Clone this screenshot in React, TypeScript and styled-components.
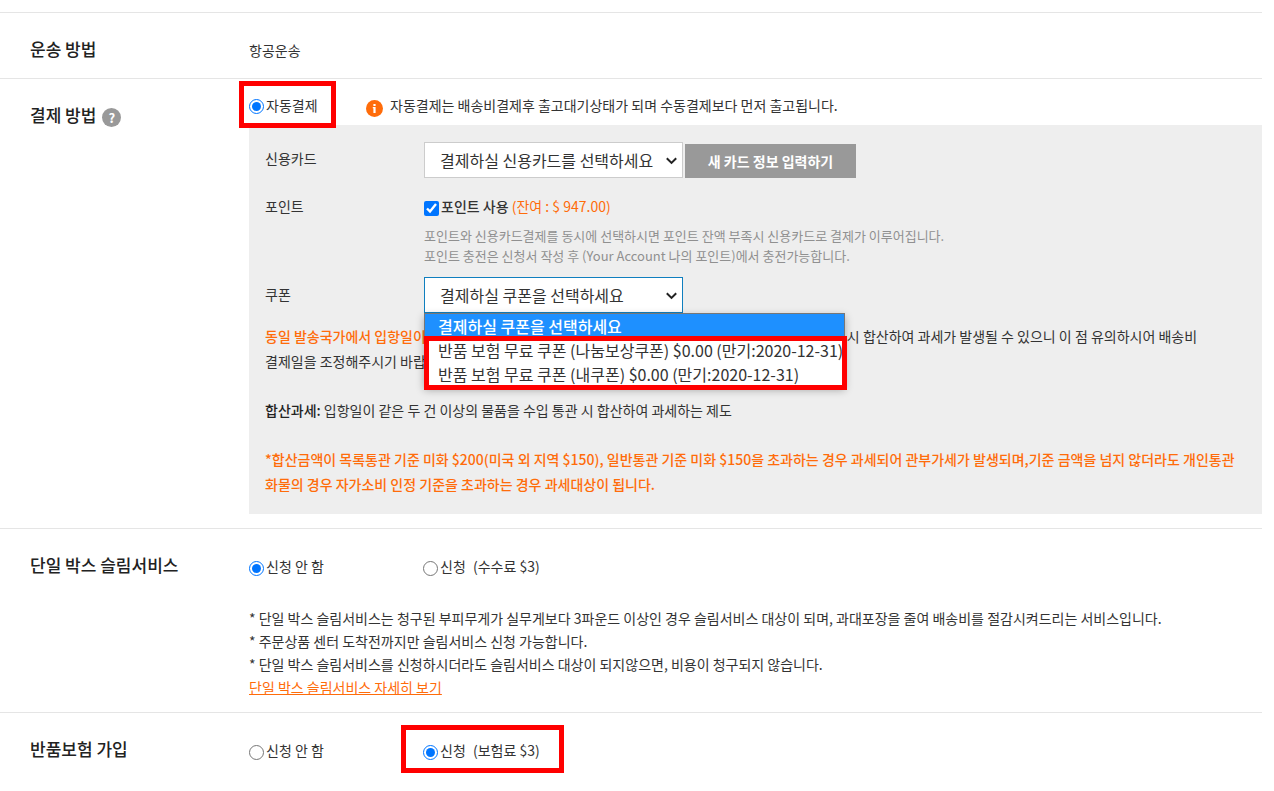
import React from 'react';
import styled, { createGlobalStyle, css } from 'styled-components';

const GlobalStyle = createGlobalStyle`
  * { box-sizing: border-box; }
  body {
    margin: 0;
    background: #fff;
    color: #333;
    font-family: "Noto Sans CJK KR", "Noto Sans", sans-serif;
    font-size: 14px;
    line-height: 24px;
    word-break: keep-all;
  }
  button, select, input { font-family: inherit; }
  p, h2, ul { margin: 0; padding: 0; }
`;

const Page = styled.main`
  padding: 12px 12px 0 0;
`;

const Section = styled.section<{ $tail?: string }>`
  display: grid;
  grid-template-columns: 249px minmax(0, 1fr);
  border-top: 1px solid #e5e5e5;
  padding-bottom: ${(p) => p.$tail ?? '14px'};
`;

const Heading = styled.div`
  display: flex;
  align-items: center;
  align-self: start;
  gap: 6px;
  padding: 24px 0 0 30px;

  h2 {
    font-size: 17px;
    line-height: 24px;
    font-weight: 500;
    color: #222;
  }
`;

const HelpButton = styled.button`
  width: 19px;
  height: 19px;
  margin-top: 4px;
  padding: 0;
  border: 0;
  border-radius: 50%;
  background: #999;
  color: #fff;
  font-size: 13px;
  line-height: 19px;
  font-weight: 700;
`;

const Content = styled.div<{ $top: string }>`
  padding-top: ${(p) => p.$top};
`;

const Options = styled.div<{ $first: string }>`
  display: grid;
  grid-template-columns: ${(p) => p.$first} auto;
  justify-content: start;
  align-items: center;
`;

const mark = css`
  content: "";
  position: absolute;
  border: 5px solid #f00;
  pointer-events: none;
  z-index: 3;
`;

const Choice = styled.label<{ $marked?: 'narrow' | 'wide' }>`
  position: relative;
  display: inline-flex;
  align-items: center;
  justify-self: start;
  gap: 2px;
  white-space: pre;

  input {
    width: 15px;
    height: 15px;
    margin: 4px 0 0;
    accent-color: #0075ff;
  }

  ${(p) =>
    p.$marked &&
    css`
      &::after {
        ${mark}
        inset: ${p.$marked === 'wide' ? '-13px -24px -11px -22px' : '-12px -18px -11px -10px'};
      }
    `}
`;

const Fee = styled.span`
  padding-left: 2px;
`;

const Notice = styled.p`
  display: flex;
  align-items: center;
  gap: 7px;

  svg { margin-top: 8px; }
`;

const Panel = styled.div`
  margin-top: 8px;
  padding: 17px 0 17px 16px;
  background: #eee;
`;

const Field = styled.div<{ $gap: string }>`
  display: grid;
  grid-template-columns: 159px minmax(0, 1fr);
  margin-bottom: ${(p) => p.$gap};
`;

const FieldLabel = styled.label<{ $height: string }>`
  line-height: ${(p) => p.$height};
`;

const Controls = styled.div`
  display: flex;
  align-items: flex-end;
  gap: 2px;
`;

const SelectWrap = styled.div`
  position: relative;
  width: 259px;
  height: 36px;

  > svg {
    position: absolute;
    top: 15px;
    right: 5px;
    pointer-events: none;
  }
`;

const Select = styled.select<{ $open?: boolean }>`
  width: 100%;
  height: 100%;
  padding: 0 0 0 15px;
  appearance: none;
  border: 1px solid ${(p) => (p.$open ? '#0f7fbf' : '#ccc')};
  border-radius: 0;
  background-color: #fff;
  color: #333;
  font-size: 16px;
`;

const CardButton = styled.button`
  width: 171px;
  height: 34px;
  padding: 0;
  border: 0;
  background: #999;
  color: #fff;
  font-size: 14px;
  font-weight: 700;
`;

const PointChoice = styled.label`
  display: flex;
  align-items: center;
  gap: 2px;
  height: 20px;
  font-weight: 500;

  input {
    width: 15px;
    height: 15px;
    margin: 4px 0 0;
    accent-color: #0075ff;
  }
`;

const Balance = styled.span`
  color: #ff6c0a;
  font-weight: 400;
`;

const Hint = styled.p`
  margin-top: 10px;
  color: #909090;
  font-size: 13px;
  line-height: 20px;
`;

const OptionList = styled.ul`
  position: absolute;
  z-index: 2;
  top: 36px;
  left: 0;
  width: 421px;
  border: 1px solid #777;
  background: #fff;
  box-shadow: 0 3px 8px rgba(0, 0, 0, 0.3);
  list-style: none;

  &::after {
    ${mark}
    inset: 22px -3px -4px -1px;
  }
`;

const Option = styled.li<{ $active?: boolean }>`
  padding-left: 13px;
  background: ${(p) => (p.$active ? '#1e90ff' : '#fff')};
  color: ${(p) => (p.$active ? '#fff' : '#333')};
  font-size: 16px;
  font-weight: ${(p) => (p.$active ? 500 : 400)};
  line-height: 24px;
  white-space: nowrap;
`;

const Paragraph = styled.p<{ $warning?: boolean }>`
  line-height: 25px;
  white-space: nowrap;
  color: ${(p) => (p.$warning ? '#ff6c0a' : '#333')};
  font-weight: ${(p) => (p.$warning ? 500 : 400)};

  & + & { margin-top: 24px; }
`;

const Covered = styled.span`
  display: inline-block;
  width: 421px;
`;

const Strong = styled.strong<{ $orange?: boolean }>`
  color: ${(p) => (p.$orange ? '#ff6c0a' : '#222')};
  font-weight: 500;
`;

const Notes = styled.ul`
  margin-top: 29px;
  list-style: none;
  line-height: 23px;
`;

const DetailLink = styled.a`
  color: #ff6c0a;
  text-decoration: underline;
`;

function InfoIcon() {
  return (
    <svg width="17" height="17" viewBox="0 0 17 17" aria-hidden="true">
      <circle cx="8.5" cy="8.5" r="8.5" fill="#ff6c0a" />
      <rect x="7.4" y="4" width="2.2" height="2" fill="#fff" />
      <path d="M6.8 7h2.8v6H7.4V8.2h-.6z" fill="#fff" />
    </svg>
  );
}

function Chevron() {
  return (
    <svg width="13" height="8" viewBox="0 0 13 8" fill="none" aria-hidden="true">
      <path d="M1.8 1.2 6.5 5.9l4.7-4.7" stroke="#222" strokeWidth="2" />
    </svg>
  );
}

const coupons = [
  '결제하실 쿠폰을 선택하세요',
  '반품 보험 무료 쿠폰 (나눔보상쿠폰) $0.00 (만기:2020-12-31)',
  '반품 보험 무료 쿠폰 (내쿠폰) $0.00 (만기:2020-12-31)',
];

export default function App() {
  return (
    <>
      <GlobalStyle />
      <Page>
        <Section $tail="16px">
          <Heading><h2>운송 방법</h2></Heading>
          <Content $top="25px"><p>항공운송</p></Content>
        </Section>

        <Section>
          <Heading>
            <h2>결제 방법</h2>
            <HelpButton type="button" aria-label="결제 방법 도움말">?</HelpButton>
          </Heading>
          <Content $top="13px">
            <Options $first="117px">
              <Choice $marked="narrow">
                <input type="radio" name="payment" defaultChecked />
                자동결제
              </Choice>
              <Notice>
                <InfoIcon />
                자동결제는 배송비결제후 출고대기상태가 되며 수동결제보다 먼저 출고됩니다.
              </Notice>
            </Options>

            <Panel>
              <Field $gap="18px">
                <FieldLabel $height="32px" htmlFor="card">신용카드</FieldLabel>
                <Controls>
                  <SelectWrap>
                    <Select id="card">
                      <option>결제하실 신용카드를 선택하세요</option>
                    </Select>
                    <Chevron />
                  </SelectWrap>
                  <CardButton type="button">새 카드 정보 입력하기</CardButton>
                </Controls>
              </Field>

              <Field $gap="11px">
                <FieldLabel $height="20px" htmlFor="point">포인트</FieldLabel>
                <div>
                  <PointChoice>
                    <input id="point" type="checkbox" defaultChecked />
                    <span>포인트 사용 <Balance>(잔여 : $ 947.00)</Balance></span>
                  </PointChoice>
                  <Hint>
                    포인트와 신용카드결제를 동시에 선택하시면 포인트 잔액 부족시 신용카드로 결제가 이루어집니다.
                    <br />
                    포인트 충전은 신청서 작성 후 (Your Account 나의 포인트)에서 충전가능합니다.
                  </Hint>
                </div>
              </Field>

              <Field $gap="11px">
                <FieldLabel $height="34px" htmlFor="coupon">쿠폰</FieldLabel>
                <SelectWrap>
                  <Select id="coupon" $open>
                    {coupons.map((c) => <option key={c}>{c}</option>)}
                  </Select>
                  <Chevron />
                  <OptionList role="listbox" aria-label="쿠폰">
                    {coupons.map((c, i) => (
                      <Option key={c} role="option" aria-selected={i === 0} $active={i === 0}>{c}</Option>
                    ))}
                  </OptionList>
                </SelectWrap>
              </Field>

              <Paragraph>
                <Strong $orange>동일 발송국가에서 입항일이</Strong>
                <Covered />시 합산하여 과세가 발생될 수 있으니 이 점 유의하시어 배송비
                <br />
                결제일을 조정해주시기 바랍니다.
              </Paragraph>
              <Paragraph>
                <Strong>합산과세:</Strong> 입항일이 같은 두 건 이상의 물품을 수입 통관 시 합산하여 과세하는 제도
              </Paragraph>
              <Paragraph $warning>
                *합산금액이 목록통관 기준 미화 $200(미국 외 지역 $150), 일반통관 기준 미화 $150을 초과하는 경우 과세되어 관부가세가 발생되며,기준 금액을 넘지 않더라도 개인통관
                <br />
                화물의 경우 자가소비 인정 기준을 초과하는 경우 과세대상이 됩니다.
              </Paragraph>
            </Panel>
          </Content>
        </Section>

        <Section $tail="13px">
          <Heading><h2>단일 박스 슬림서비스</h2></Heading>
          <Content $top="25px">
            <Options $first="174px">
              <Choice>
                <input type="radio" name="slim" defaultChecked />
                신청 안 함
              </Choice>
              <Choice>
                <input type="radio" name="slim" />
                신청 <Fee>(수수료 $3)</Fee>
              </Choice>
            </Options>
            <Notes>
              <li>* 단일 박스 슬림서비스는 청구된 부피무게가 실무게보다 3파운드 이상인 경우 슬림서비스 대상이 되며, 과대포장을 줄여 배송비를 절감시켜드리는 서비스입니다.</li>
              <li>* 주문상품 센터 도착전까지만 슬림서비스 신청 가능합니다.</li>
              <li>* 단일 박스 슬림서비스를 신청하시더라도 슬림서비스 대상이 되지않으면, 비용이 청구되지 않습니다.</li>
              <li><DetailLink href="#slim">단일 박스 슬림서비스 자세히 보기</DetailLink></li>
            </Notes>
          </Content>
        </Section>

        <Section>
          <Heading><h2>반품보험 가입</h2></Heading>
          <Content $top="25px">
            <Options $first="174px">
              <Choice>
                <input type="radio" name="insurance" />
                신청 안 함
              </Choice>
              <Choice $marked="wide">
                <input type="radio" name="insurance" defaultChecked />
                신청 <Fee>(보험료 $3)</Fee>
              </Choice>
            </Options>
          </Content>
        </Section>
      </Page>
    </>
  );
}
